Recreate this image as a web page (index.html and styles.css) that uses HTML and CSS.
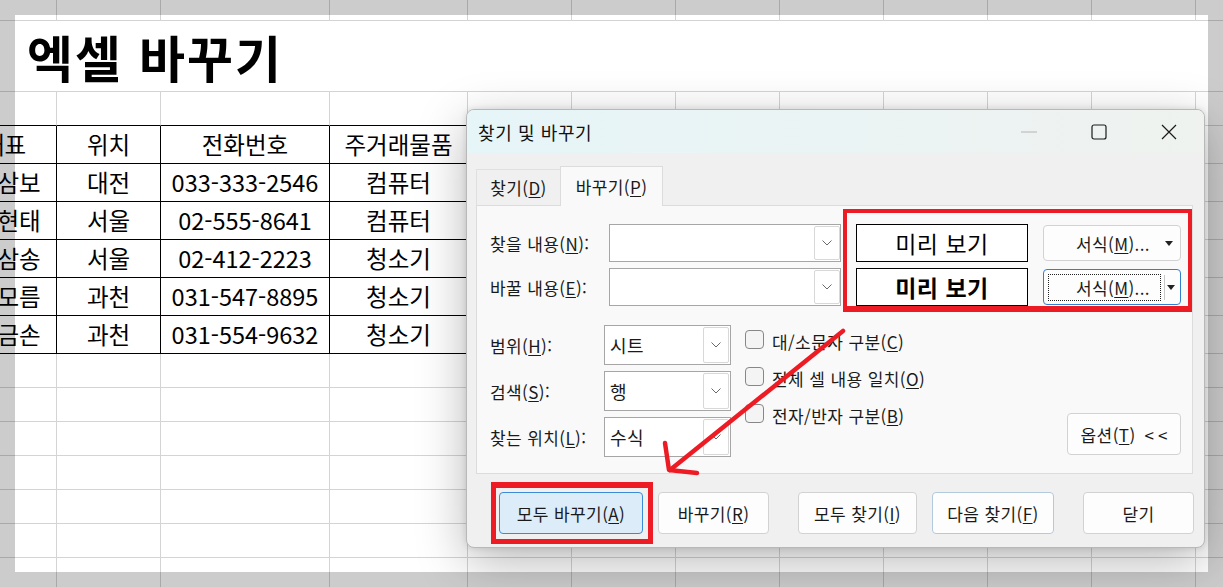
FILE: index.html
```html
<!DOCTYPE html>
<html lang="ko">
<head>
<meta charset="utf-8">
<title>엑셀 바꾸기</title>
<link rel="stylesheet" href="styles.css">
</head>
<body>
<div class="screen">
  <div class="sheet">
    <div></div><div></div><div></div><div></div><div></div><div></div><div></div><div></div><div></div><div></div><div></div><div></div>
    <div class="title">엑셀 바꾸기</div>
    <div class="tt"></div><div class="tt"></div><div class="tt"></div><div class="tt"></div><div></div><div></div><div></div><div></div><div></div><div></div><div></div><div></div>
    <div class="t">대표</div><div class="t">위치</div><div class="t">전화번호</div><div class="t">주거래물품</div><div></div><div></div><div></div><div></div><div></div><div></div><div></div><div></div>
    <div class="t first">삼보</div><div class="t">대전</div><div class="t">033-333-2546</div><div class="t">컴퓨터</div><div></div><div></div><div></div><div></div><div></div><div></div><div></div><div></div>
    <div class="t first">현태</div><div class="t">서울</div><div class="t">02-555-8641</div><div class="t">컴퓨터</div><div></div><div></div><div></div><div></div><div></div><div></div><div></div><div></div>
    <div class="t first">삼송</div><div class="t">서울</div><div class="t">02-412-2223</div><div class="t">청소기</div><div></div><div></div><div></div><div></div><div></div><div></div><div></div><div></div>
    <div class="t first">모름</div><div class="t">과천</div><div class="t">031-547-8895</div><div class="t">청소기</div><div></div><div></div><div></div><div></div><div></div><div></div><div></div><div></div>
    <div class="t first">금손</div><div class="t">과천</div><div class="t">031-554-9632</div><div class="t">청소기</div><div></div><div></div><div></div><div></div><div></div><div></div><div></div><div></div>
    <div></div><div></div><div></div><div></div><div></div><div></div><div></div><div></div><div></div><div></div><div></div><div></div>
    <div></div><div></div><div></div><div></div><div></div><div></div><div></div><div></div><div></div><div></div><div></div><div></div>
    <div></div><div></div><div></div><div></div><div></div><div></div><div></div><div></div><div></div><div></div><div></div><div></div>
    <div></div><div></div><div></div><div></div><div></div><div></div><div></div><div></div><div></div><div></div><div></div><div></div>
    <div></div><div></div><div></div><div></div><div></div><div></div><div></div><div></div><div></div><div></div><div></div><div></div>
    <div></div><div></div><div></div><div></div><div></div><div></div><div></div><div></div><div></div><div></div><div></div><div></div>
    <div></div><div></div><div></div><div></div><div></div><div></div><div></div><div></div><div></div><div></div><div></div><div></div>
  </div>

  <div class="dialog">
    <div class="titlebar">
      <span class="dtitle">찾기 및 바꾸기</span>
      <div class="winctl">
        <span class="wbtn"><svg width="16" height="2" viewBox="0 0 16 2"><path d="M0 1H16" stroke="#b4b4b4" stroke-width="1"/></svg></span>
        <span class="wbtn"><svg width="16" height="16" viewBox="0 0 16 16"><rect x="1" y="1" width="14" height="14" rx="2" fill="none" stroke="#1a1a1a" stroke-width="1.2"/></svg></span>
        <span class="wbtn"><svg width="16" height="16" viewBox="0 0 16 16"><path d="M1 1L15 15M15 1L1 15" stroke="#1a1a1a" stroke-width="1.2"/></svg></span>
      </div>
    </div>

    <div class="tabs">
      <div class="tab">찾기(<u>D</u>)</div>
      <div class="tab active">바꾸기(<u>P</u>)</div>
    </div>

    <div class="panel">
      <div class="upper">
        <div class="fields">
          <span class="lbl">찾을 내용(<u>N</u>):</span>
          <div class="combo"><span class="dd"><svg width="10" height="6" viewBox="0 0 10 6"><path d="M0.5 0.5L5 5L9.5 0.5" fill="none" stroke="#6a6a6a"/></svg></span></div>
          <span class="lbl">바꿀 내용(<u>E</u>):</span>
          <div class="combo"><span class="dd"><svg width="10" height="6" viewBox="0 0 10 6"><path d="M0.5 0.5L5 5L9.5 0.5" fill="none" stroke="#6a6a6a"/></svg></span></div>
        </div>
        <div class="fmtbox">
          <div class="preview">미리 보기</div>
          <div class="fmt"><span class="fmt-label">서식(<u>M</u>)...</span><span class="caret"><svg width="8" height="5" viewBox="0 0 8 5"><path d="M0 0H8L4 5Z" fill="#222"/></svg></span></div>
          <div class="preview bold">미리 보기</div>
          <div class="fmt focus"><span class="fmt-label">서식(<u>M</u>)...</span><span class="sep"></span><span class="caret"><svg width="8" height="5" viewBox="0 0 8 5"><path d="M0 0H8L4 5Z" fill="#222"/></svg></span></div>
        </div>
      </div>

      <div class="lower">
        <div class="opts">
          <span class="lbl">범위(<u>H</u>):</span>
          <div class="select"><span class="val">시트</span><span class="dd"><svg width="10" height="6" viewBox="0 0 10 6"><path d="M0.5 0.5L5 5L9.5 0.5" fill="none" stroke="#6a6a6a"/></svg></span></div>
          <span class="lbl">검색(<u>S</u>):</span>
          <div class="select"><span class="val">행</span><span class="dd"><svg width="10" height="6" viewBox="0 0 10 6"><path d="M0.5 0.5L5 5L9.5 0.5" fill="none" stroke="#6a6a6a"/></svg></span></div>
          <span class="lbl">찾는 위치(<u>L</u>):</span>
          <div class="select"><span class="val">수식</span><span class="dd"><svg width="10" height="6" viewBox="0 0 10 6"><path d="M0.5 0.5L5 5L9.5 0.5" fill="none" stroke="#6a6a6a"/></svg></span></div>
        </div>
        <div class="checks">
          <div class="chk"><span class="box"></span><span>대/소문자 구분(<u>C</u>)</span></div>
          <div class="chk"><span class="box"></span><span>전체 셀 내용 일치(<u>O</u>)</span></div>
          <div class="chk"><span class="box"></span><span>전자/반자 구분(<u>B</u>)</span></div>
        </div>
        <div class="btn optbtn">옵션(<u>T</u>)<span class="chev">&lt;&lt;</span></div>
      </div>
    </div>

    <div class="actions">
      <div class="mark-btn"><div class="btn primary w144">모두 바꾸기(<u>A</u>)</div></div>
      <div class="btn w111 g5">바꾸기(<u>R</u>)</div>
      <div class="btn w119 g29">모두 찾기(<u>I</u>)</div>
      <div class="btn w122 g15 hint">다음 찾기(<u>F</u>)</div>
      <div class="btn w111 g29">닫기</div>
    </div>
  </div>

  <svg class="annot" width="1223" height="587" viewBox="0 0 1223 587">
    <path d="M843 331L670 470" fill="none" stroke="#ed1c24" stroke-width="4.5" stroke-linecap="round"/>
    <path d="M665 443L669 470L697 473" fill="none" stroke="#ed1c24" stroke-width="4.5" stroke-linecap="round" stroke-linejoin="round"/>
  </svg>
</div>
</body>
</html>
```

FILE: styles.css
```css
* { box-sizing: border-box; margin: 0; padding: 0; }
html, body { width: 1223px; height: 587px; overflow: hidden; }
body {
  font-family: "Noto Sans CJK KR", "Noto Sans", sans-serif;
  color: #000;
  background: #fff;
}
u { text-decoration: underline; text-underline-offset: 2px; text-decoration-thickness: 1px; }

.screen {
  position: relative;
  width: 1223px;
  height: 587px;
  overflow: hidden;
  background: #fff;
}
.screen::after {
  content: "";
  position: absolute;
  inset: 0;
  box-shadow: inset 0 0 0 15px rgba(0, 0, 0, 0.2);
  pointer-events: none;
  z-index: 1;
}

/* spreadsheet */
.sheet {
  display: grid;
  grid-template-columns: 104px 104px 169px 138px repeat(8, 104px);
  grid-template-rows: 34px 71px 34px repeat(6, 38px) repeat(7, 34px);
  width: max-content;
  margin: -13px 0 0 -47px;
}
.sheet > div {
  border-right: 1px solid #d4d4d4;
  border-bottom: 1px solid #d4d4d4;
  display: flex;
  align-items: center;
  justify-content: center;
  white-space: nowrap;
  font-size: 23.5px;
  line-height: 1;
}
.sheet > .title {
  grid-column: 1 / -1;
  justify-content: flex-start;
  padding-left: 74px;
  font-size: 50px;
  letter-spacing: 2px;
  font-weight: 700;
  border-right: none;
}
.sheet > .tt { border-bottom-color: #000; }
.sheet > .t { border-color: #000; }
.sheet > .first { padding-left: 29px; }

/* dialog */
.dialog {
  position: absolute;
  left: 466px;
  top: 109px;
  width: 739px;
  height: 439px;
  z-index: 2;
  background: #f0f0f0;
  border: 1px solid #b8b8b8;
  border-radius: 8px;
  overflow: hidden;
  box-shadow: 0 14px 50px rgba(0, 0, 0, 0.28), 0 0 6px rgba(0, 0, 0, 0.12);
  font-size: 17px;
  letter-spacing: 0.4px;
  color: #1a1a1a;
}
.titlebar {
  height: 43px;
  display: flex;
  align-items: center;
  padding-left: 11px;
  background: linear-gradient(90deg, #e6f5f8, #eff2ef);
}
.dtitle { flex: 1; font-size: 18px; letter-spacing: 0.6px; color: #111; }
.winctl { display: flex; }
.wbtn {
  width: 70px;
  height: 43px;
  display: flex;
  align-items: center;
  justify-content: center;
}

.tabs {
  display: flex;
  align-items: flex-end;
  height: 39px;
  margin: 13px 0 0 9px;
  position: relative;
  z-index: 1;
}
.tab {
  height: 36px;
  width: 84px;
  display: flex;
  align-items: center;
  justify-content: center;
  border: 1px solid #e0e0e0;
  border-bottom: none;
  border-right: none;
  background: #f0f0f0;
  white-space: nowrap;
}
.tab.active {
  width: 103px;
  height: 40px;
  margin-bottom: -1px;
  background: #f9f9f9;
  border: 1px solid #dcdcdc;
  border-bottom: none;
}

.panel {
  margin-left: 9px;
  width: 717px;
  height: 269px;
  border: 1px solid #dcdcdc;
  background: #f9f9f9;
  display: flex;
  flex-direction: column;
}
.upper { display: flex; align-items: flex-start; height: 106px; }
.fields {
  display: grid;
  grid-template-columns: 119px 232px;
  grid-auto-rows: 38px;
  row-gap: 6px;
  margin: 18px 0 0 13px;
}
.lbl { display: flex; align-items: center; white-space: nowrap; }
.combo, .select {
  display: flex;
  justify-content: flex-end;
  align-items: stretch;
  background: #fff;
  border: 1px solid #a6a6a6;
}
.combo { padding: 1px 0; }
.select { padding: 1px; justify-content: space-between; }
.select .val { display: flex; align-items: center; padding-left: 4px; font-size: 18px; }
.dd {
  width: 26px;
  border: 1px solid #d8d8d8;
  border-radius: 2px;
  display: flex;
  align-items: center;
  justify-content: center;
  background: #fff;
}

.fmtbox {
  margin: 3px 0 0 2px;
  width: 349px;
  border: 4px solid #ed1c24;
  border-bottom-width: 6px;
  padding: 11px 0 0 9px;
  display: grid;
  grid-template-columns: 172px 138px;
  grid-auto-rows: 38px;
  column-gap: 15px;
  row-gap: 6px;
  position: relative;
  z-index: 1;
}
.preview {
  background: #fff;
  border: 1px solid #000;
  display: flex;
  align-items: center;
  justify-content: center;
  font-size: 23px;
  letter-spacing: 0.5px;
  color: #000;
}
.preview.bold { font-weight: 700; }
.fmt {
  height: 36px;
  align-self: center;
  display: flex;
  align-items: center;
  background: #fdfdfd;
  border: 1px solid #d2d2d2;
  border-radius: 4px;
  padding: 0 4px;
}
.fmt-label {
  width: 113px;
  height: 27px;
  display: flex;
  align-items: center;
  justify-content: flex-end;
  padding-right: 10px;
  border: 1px dotted transparent;
  white-space: nowrap;
}
.fmt .caret { flex: 1; display: flex; justify-content: center; align-items: center; }
.fmt.focus { border-color: #2f7fd2; }
.fmt.focus .fmt-label { border-color: #222; }
.sep { width: 1px; height: 25px; background: #c8c8c8; margin-left: 3px; }

.lower { flex: 1; display: flex; align-items: flex-start; }
.opts {
  display: grid;
  grid-template-columns: 114px 127px;
  grid-auto-rows: 40px;
  row-gap: 6px;
  margin: 13px 0 0 13px;
}
.checks {
  display: flex;
  flex-direction: column;
  gap: 13px;
  margin: 18px 0 0 14px;
}
.chk { display: flex; align-items: flex-start; height: 24px; line-height: 24px; white-space: nowrap; }
.box {
  width: 19px;
  height: 19px;
  border: 1px solid #878787;
  border-radius: 4px;
  background: #f4f4f4;
  margin-right: 8px;
}

.btn {
  height: 42px;
  display: flex;
  align-items: center;
  justify-content: center;
  background: #fdfdfd;
  border: 1px solid #d2d2d2;
  border-radius: 4px;
  white-space: nowrap;
}
.optbtn {
  width: 114px;
  margin: 0 11px 18px auto;
  align-self: flex-end;
}
.chev { margin-left: 9px; letter-spacing: 4px; margin-right: -4px; }

.actions {
  display: flex;
  align-items: center;
  margin: 8px 0 0 24px;
}
.mark-btn {
  border: 5px solid #ed1c24;
  border-top-width: 6px;
  padding: 4px 5px 5px 3px;
}
.btn.primary { background: #ddecf9; border-color: #3d8ad8; }
.btn.hint { border-color: #b3c9de; }
.w144 { width: 144px; }
.w111 { width: 111px; }
.w119 { width: 119px; }
.w122 { width: 122px; }
.g5 { margin-left: 5px; }
.g15 { margin-left: 15px; }
.g29 { margin-left: 29px; }

.annot {
  position: absolute;
  left: 0;
  top: 0;
  z-index: 3;
  pointer-events: none;
}
```
